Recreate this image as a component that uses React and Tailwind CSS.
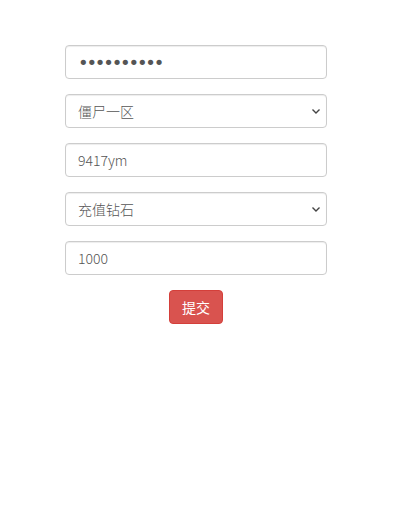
import { useState } from 'react';

const inputCls =
  'block w-full h-[34px] px-3 text-[14px] font-light text-[#555] bg-white border border-[#ccc] rounded-[4px] shadow-[inset_0_1px_1px_rgba(0,0,0,0.075)] outline-none';

const Chevron = () => (
  <svg
    className="absolute right-[6px] top-1/2 -translate-y-1/2 pointer-events-none"
    width="10"
    height="10"
    viewBox="0 0 10 10"
    fill="none"
    stroke="#444"
    strokeWidth="1.4"
  >
    <path d="M1.5 3.5 L5 7 L8.5 3.5" />
  </svg>
);

const SelectBox = ({ value, onChange, options }) => (
  <div className="relative">
    <select value={value} onChange={e => onChange(e.target.value)} className={`${inputCls} appearance-none pr-6`}>
      {options.map(o => (
        <option key={o} value={o}>{o}</option>
      ))}
    </select>
    <Chevron />
  </div>
);

const App = () => {
  const [pwd, setPwd] = useState('1234567890');
  const [server, setServer] = useState('僵尸一区');
  const [account, setAccount] = useState('9417ym');
  const [type, setType] = useState('充值钻石');
  const [amount, setAmount] = useState('1000');

  return (
    <div
      className="min-h-[527px] bg-white pt-[45px]"
      style={{ fontFamily: '"Noto Sans CJK SC", "Noto Sans", sans-serif' }}
    >
      <form onSubmit={e => e.preventDefault()} className="ml-[65px] w-[262px] flex flex-col gap-[15px]">
        {/* bigger bullets, squeezed back to the same run length */}
        <input
          type="password"
          value={pwd}
          onChange={e => setPwd(e.target.value)}
          className={`${inputCls} !font-normal font-['DejaVu_Sans',sans-serif] text-[18px] tracking-[-2.2px]`}
        />
        <SelectBox value={server} onChange={setServer} options={['僵尸一区', '僵尸二区']} />
        <input type="text" value={account} onChange={e => setAccount(e.target.value)} className={inputCls} />
        <SelectBox value={type} onChange={setType} options={['充值钻石', '充值金币']} />
        <input type="text" value={amount} onChange={e => setAmount(e.target.value)} className={inputCls} />
        <div className="flex justify-center">
          <button
            type="submit"
            className="h-[34px] px-3 text-[14px] text-white bg-[#d9534f] border border-[#d43f3a] rounded-[4px]"
          >
            提交
          </button>
        </div>
      </form>
    </div>
  );
};

export default App;
